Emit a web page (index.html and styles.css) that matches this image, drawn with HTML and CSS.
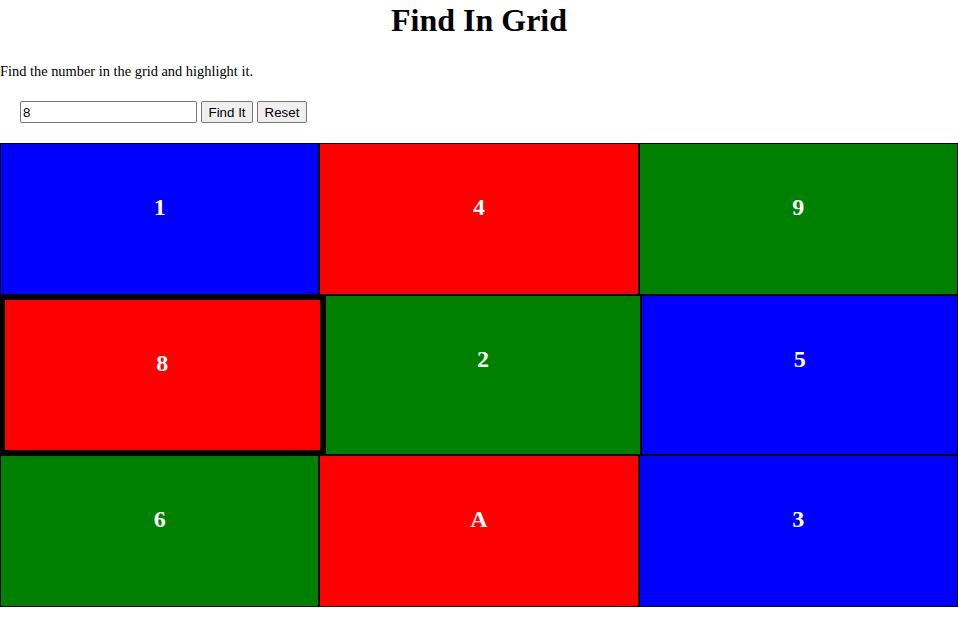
FILE: index.html
```html
<!DOCTYPE html>
<html lang="en">
<head>
<meta charset="utf-8">
<title>Find In Grid</title>
<link rel="stylesheet" href="styles.css">
</head>
<body>
<h1 class="title">Find In Grid</h1>
<p class="intro">Find the number in the grid and highlight it.</p>
<div class="controls">
  <input class="search" type="text" value="8">
  <button class="btn" type="button">Find It</button>
  <button class="btn" type="button">Reset</button>
</div>
<div class="grid">
  <div class="row">
    <div class="cell blue">1</div>
    <div class="cell red">4</div>
    <div class="cell green">9</div>
  </div>
  <div class="row">
    <div class="cell red highlight">8</div>
    <div class="cell green">2</div>
    <div class="cell blue">5</div>
  </div>
  <div class="row">
    <div class="cell green">6</div>
    <div class="cell red">A</div>
    <div class="cell blue">3</div>
  </div>
</div>
</body>
</html>
```

FILE: styles.css
```css
html, body {
  margin: 0;
  padding: 0;
  background: #fff;
}

body {
  font-family: "Liberation Serif", "Times New Roman", serif;
  color: #000;
}

.title {
  font-size: 32px;
  font-weight: bold;
  text-align: center;
  margin: 0 0 24px;
  padding-top: 2px;
}

.intro {
  font-size: 14.4px;
  margin: 0;
}

.controls {
  display: flex;
  align-items: center;
  gap: 4px;
  padding-left: 20px;
  margin-top: 21px;
}

.search {
  box-sizing: border-box;
  width: 177px;
  height: 22px;
  margin: 0;
  padding: 1px 2px;
  border: 1px solid #767676;
  border-radius: 2px;
  font-family: "Liberation Sans", Arial, sans-serif;
  font-size: 13.33px;
  color: #000;
  background: #fff;
}

.btn {
  box-sizing: border-box;
  height: 22px;
  margin: 0;
  padding: 1px 6.5px;
  border: 1px solid #767676;
  border-radius: 2px;
  background: #efefef;
  font-family: "Liberation Sans", Arial, sans-serif;
  font-size: 13.33px;
  color: #000;
}

.grid {
  margin-top: 20px;
}

.row {
  display: flex;
}

.cell {
  flex: 1 1 0;
  min-height: 100px;
  padding-top: 50px;
  border: 1px solid #000;
  color: #fff;
  font-size: 24px;
  font-weight: bold;
  text-align: center;
}

.cell.highlight {
  border-width: 5px;
}

.blue { background: #0000ff; }
.red { background: #ff0000; }
.green { background: #008000; }
```
